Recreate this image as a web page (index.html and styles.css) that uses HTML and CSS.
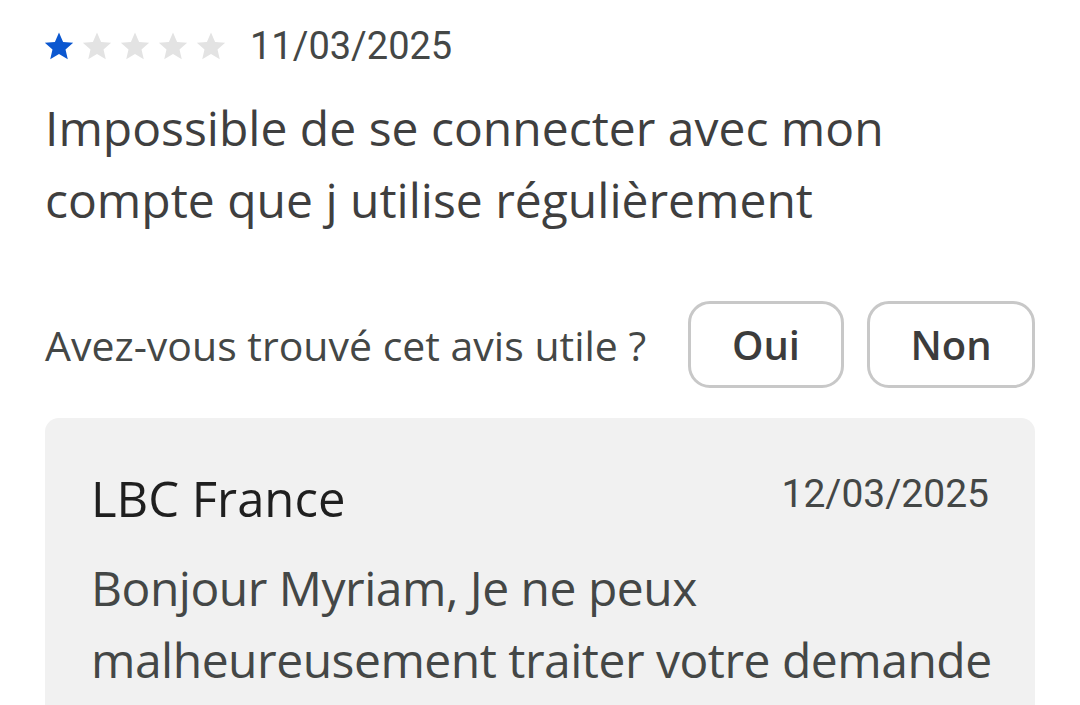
FILE: index.html
```html
<!DOCTYPE html>
<html lang="fr">
<head>
  <meta charset="UTF-8" />
  <meta name="viewport" content="width=device-width, initial-scale=1.0"/>
  <title>Avis</title>
  <link rel="stylesheet" href="styles.css">
</head>
<body>
  <div class="review">
    <div class="review-head">
      <div class="stars">
        <svg class="star on" viewBox="0 0 24 24"><path d="M12 2.5l2.9 6.6 7.1.6-5.4 4.7 1.6 7-6.2-3.7-6.2 3.7 1.6-7L2 9.7l7.1-.6z"/></svg>
        <svg class="star" viewBox="0 0 24 24"><path d="M12 2.5l2.9 6.6 7.1.6-5.4 4.7 1.6 7-6.2-3.7-6.2 3.7 1.6-7L2 9.7l7.1-.6z"/></svg>
        <svg class="star" viewBox="0 0 24 24"><path d="M12 2.5l2.9 6.6 7.1.6-5.4 4.7 1.6 7-6.2-3.7-6.2 3.7 1.6-7L2 9.7l7.1-.6z"/></svg>
        <svg class="star" viewBox="0 0 24 24"><path d="M12 2.5l2.9 6.6 7.1.6-5.4 4.7 1.6 7-6.2-3.7-6.2 3.7 1.6-7L2 9.7l7.1-.6z"/></svg>
        <svg class="star" viewBox="0 0 24 24"><path d="M12 2.5l2.9 6.6 7.1.6-5.4 4.7 1.6 7-6.2-3.7-6.2 3.7 1.6-7L2 9.7l7.1-.6z"/></svg>
      </div>
      <span class="review-date">11/03/2025</span>
    </div>

    <p class="review-text">Impossible de se connecter avec mon compte que j utilise régulièrement</p>

    <div class="helpful">
      <span class="helpful-label">Avez-vous trouvé cet avis utile ?</span>
      <button class="vote-btn oui">Oui</button>
      <button class="vote-btn non">Non</button>
    </div>

    <div class="reply">
      <div class="reply-head">
        <span class="reply-author">LBC France</span>
        <span class="reply-date">12/03/2025</span>
      </div>
      <p class="reply-text">Bonjour Myriam, Je ne peux malheureusement traiter votre demande</p>
    </div>
  </div>
</body>
</html>
```

FILE: styles.css
```css
body {
  margin: 0;
  background: #fff;
  font-family: "Open Sans", Roboto, sans-serif;
  color: #444746;
  overflow: hidden;
}

.review {
  padding: 24px 45px 0 45px;
}

.review-head {
  display: flex;
  align-items: center;
  gap: 22px;
  height: 44px;
}

.stars {
  display: flex;
  gap: 4px;
  margin-left: -3px;
}

.star {
  width: 34px;
  height: 34px;
  fill: #e3e3e3;
}

.star.on {
  fill: #0b57d0;
}

.review-date {
  font-family: Roboto, sans-serif;
  font-size: 38px;
  color: #444746;
}

.review-text {
  margin: 24px 0 0 0;
  font-size: 48px;
  line-height: 72px;
  color: #3f3f3f;
  width: 900px;
}

.helpful {
  display: flex;
  align-items: center;
  margin-top: 65px;
}

.helpful-label {
  flex: 1;
  white-space: nowrap;
  font-size: 41px;
  color: #444746;
}

.vote-btn {
  flex-shrink: 0;
  font-family: inherit;
  font-size: 40px;
  font-weight: 600;
  color: #3c3c3c;
  background: #fff;
  border: 3px solid #c8c8c8;
  border-radius: 22px;
  height: 87px;
  padding: 0;
}

.vote-btn.oui {
  width: 156px;
}

.vote-btn.non {
  width: 168px;
  margin-left: 23px;
}

.reply {
  margin-top: 30px;
  background: #f1f1f1;
  border-radius: 14px;
  padding: 48px 46px 60px 46px;
}

.reply-head {
  display: flex;
  justify-content: space-between;
  align-items: flex-start;
}

.reply-author {
  font-size: 49px;
  line-height: 64px;
  color: #1f1f1f;
}

.reply-date {
  font-family: Roboto, sans-serif;
  font-size: 39px;
  line-height: 56px;
  color: #444746;
}

.reply-text {
  margin: 22px -30px 0 0;
  font-size: 48px;
  line-height: 72px;
  letter-spacing: -0.5px;
  color: #444746;
}
```
